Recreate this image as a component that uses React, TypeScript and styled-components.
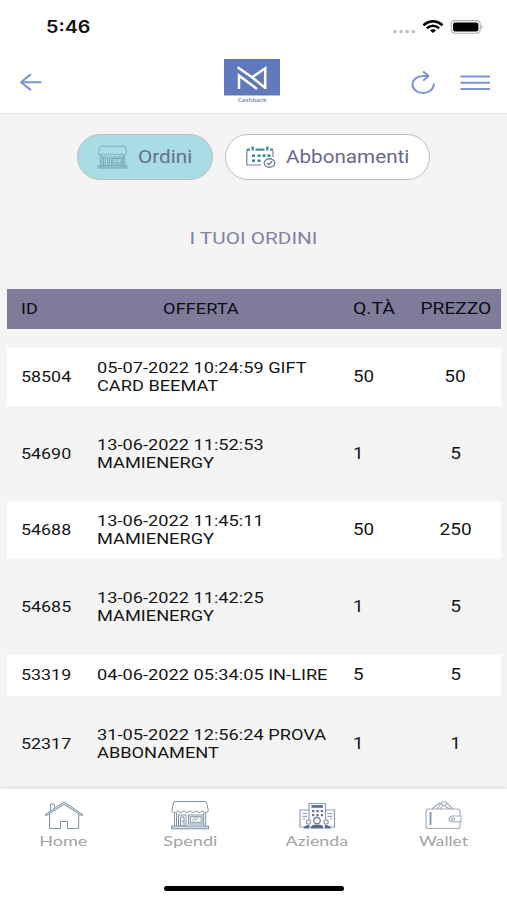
import React from "react";
import styled, { createGlobalStyle } from "styled-components";

const Global = createGlobalStyle`
  * { box-sizing: border-box; }
  body { margin: 0; background: #fff; font-family: Roboto, "Liberation Sans", sans-serif; }
`;

const Screen = styled.div`
  width: 507px;
  height: 900px;
  display: flex;
  flex-direction: column;
  overflow: hidden;
  background: #f4f4f4;
`;

const Wide = styled.span<{ $x: number; $from?: string }>`
  display: inline-block;
  white-space: nowrap;
  transform: scaleX(${(p) => p.$x});
  transform-origin: ${(p) => p.$from ?? "left"} center;
`;

const StatusBar = styled.div`
  height: 52px;
  flex: none;
  display: flex;
  justify-content: space-between;
  padding: 16px 23px 0 46px;
  background: #fff;
`;

const Clock = styled.div`
  padding-top: 1px;
  font: 600 17px/21px Inter, sans-serif;
  color: #111;
`;

const Header = styled.header`
  height: 62px;
  flex: none;
  display: grid;
  grid-template-columns: 224px 56px 1fr;
  background: #fff;
  border-bottom: 1px solid #e9e9e9;
`;

const HeaderSide = styled.div<{ $end?: boolean }>`
  display: flex;
  justify-content: ${(p) => (p.$end ? "flex-end" : "flex-start")};
  padding: ${(p) => (p.$end ? "17px 16px 0 0" : "20px 0 0 19px")};
  gap: 24px;
`;

const Brand = styled.div`
  display: flex;
  flex-direction: column;
  align-items: center;
  padding-top: 7px;
  font: 600 5.3px/9px "Open Sans", sans-serif;
  color: #6b82c4;
`;

const Main = styled.main`
  flex: 1;
  min-height: 0;
  overflow: hidden;
  padding: 20px 6.5px 0 7.4px;
`;

const Tabs = styled.div`
  display: flex;
  gap: 12px;
  padding-left: 70px;
`;

const Tab = styled.button<{ $active?: boolean; $w: number }>`
  width: ${(p) => p.$w}px;
  height: 46px;
  display: flex;
  align-items: center;
  gap: 9.5px;
  padding: 0 0 0 19px;
  border: 1.5px solid #bdbdc1;
  border-radius: 23px;
  background: ${(p) => (p.$active ? "#a9dde4" : "#fff")};
  color: ${(p) => (p.$active ? "#667089" : "#6b6889")};
  font: 400 17.5px/22px Roboto, sans-serif;
`;

const Title = styled.h1`
  margin: 47px 0 0;
  height: 22px;
  text-align: center;
  font: 400 17px/22px Roboto, sans-serif;
  color: #8481a3;
`;

const Table = styled.div`
  margin-top: 40px;
  display: flex;
  flex-direction: column;
  gap: 19.3px;
`;

const Row = styled.div<{ $kind: "head" | "odd" | "even"; $h: number }>`
  height: ${(p) => p.$h}px;
  flex: none;
  display: grid;
  grid-template-columns: 76px 256px 58px 1fr;
  align-items: center;
  padding-left: 13.3px;
  background: ${(p) => ({ head: "#7f7c9b", odd: "#fff", even: "transparent" })[p.$kind]};
  color: ${(p) => (p.$kind === "head" ? "#0d0d14" : "#161616")};
  font-size: 15.4px;
  line-height: 18px;
`;

const Cell = styled.div<{ $align?: string; $big?: boolean; $inset?: number }>`
  text-align: ${(p) => p.$align ?? "left"};
  font-size: ${(p) => (p.$big ? "16.2px" : "inherit")};
  padding-right: ${(p) => p.$inset ?? 0}px;
`;

const Offer = styled.div`
  width: 203px;
  transform: scaleX(1.183);
  transform-origin: left center;
`;

const NavBar = styled.nav`
  height: 111px;
  flex: none;
  display: flex;
  flex-direction: column;
  align-items: center;
  background: #fff;
  box-shadow: 0 -1px 4px rgba(0, 0, 0, 0.1);
  z-index: 1;
`;

const NavItems = styled.div`
  width: 507px;
  height: 97px;
  padding-left: 0.4px;
  display: grid;
  grid-template-columns: repeat(4, 126.5px);
`;

const NavItem = styled.div`
  display: flex;
  flex-direction: column;
  align-items: center;
  padding-top: 11px;
  font: 400 13px/18px Lato, sans-serif;
  color: #a3a3a6;
  svg { margin-bottom: 2px; }
`;

const HomeIndicator = styled.div`
  width: 180px;
  height: 5px;
  border-radius: 3px;
  background: #000;
`;

const StatusIcons = () => (
  <svg width="92" height="24" viewBox="0 0 92 24">
    <g fill="#c3c3c5">
      <circle cx="3" cy="15.6" r="1.9" /><circle cx="9" cy="15.6" r="1.9" />
      <circle cx="15.2" cy="15.6" r="1.9" /><circle cx="21.3" cy="15.6" r="1.9" />
    </g>
    <g fill="none" stroke="#000" strokeWidth="2.4">
      <path d="M31.4 9.2 Q41 1.5 50.6 9.2" />
      <path d="M34.8 12.2 Q41 7.4 47.2 12.2" />
    </g>
    <path d="M37.8 14.3 Q41 12 44.2 14.3 L41 17Z" fill="#000" />
    <rect x="59.2" y="4.6" width="29" height="12.6" rx="3.6" fill="none" stroke="#aaa" strokeWidth="1.1" />
    <rect x="61" y="6.4" width="25.4" height="9" rx="2" fill="#000" />
    <path d="M89.6 9 Q91.6 11 89.6 13Z" fill="#999" />
  </svg>
);

const BackIcon = () => (
  <svg width="24" height="22" viewBox="0 0 24 22" fill="none" stroke="#7f94d8" strokeWidth="2.1" strokeLinecap="round" strokeLinejoin="round">
    <path d="M21.7 10.2H2.2M11.3 2.6L2 10.2L11.3 17.6" />
  </svg>
);

const RefreshIcon = () => (
  <svg width="26" height="28" viewBox="0 0 26 28" fill="none" stroke="#7f94d8" strokeWidth="2" strokeLinecap="round" strokeLinejoin="round">
    <path d="M18 7H13C7 7 2.500 10.800 2.500 15.600C2.500 20.200 7 24 13 24C19 24 23.600 20.200 23.800 15.300" />
    <path d="M13.800 3L18.600 7L13.800 11" />
  </svg>
);

const MenuIcon = () => (
  <svg width="31" height="28" viewBox="0 0 31 28" stroke="#7f94d8" strokeWidth="2" strokeLinecap="round">
    <path d="M1.300 7.500H29.300M1.300 13.800H29.300M1.300 20H29.300" />
  </svg>
);

const Logo = () => (
  <svg width="56" height="37" viewBox="0 0 56 37">
    <rect width="56" height="36.500" fill="#6079bc" />
    <g fill="none" stroke="#fff" strokeWidth="2.500">
      <path d="M15 30V16.500L33 30" />
      <path d="M13.600 8.200L28 18.300L41.200 9.300V30" />
      <path d="M28 18.300L41 28.700" />
    </g>
  </svg>
);

const ShopIcon = ({ color, tint, width = 40, height = 30 }: { color: string; tint: string; width?: number; height?: number }) => (
  <svg width={width} height={height} viewBox="0 0 40 30" preserveAspectRatio="none" fill="none" stroke={color} strokeWidth="1">
    <path d="M5 1.500H35Q36.500 1.500 36.800 3L38.300 10.500Q38 12.500 35.500 12.500Q33 12.500 32.400 10.500Q31.500 12.500 29.300 12.500Q27.200 12.500 26.400 10.500Q25.500 12.500 23.200 12.500Q21 12.500 20.200 10.500Q19.300 12.500 17 12.500Q14.800 12.500 14 10.500Q13 12.500 10.800 12.500Q8.600 12.500 7.700 10.500Q6.500 12.500 4.300 12.500Q2 12.500 1.800 10.500L3.300 3Q3.600 1.500 5 1.500Z" />
    <path d="M4.500 12.500V26M6.500 12.500V26M33.700 12.500V26M35.700 12.500V26" />
    <rect x="8.500" y="15" width="7.500" height="11" /><path d="M10.500 26V17H14V26" />
    <circle cx="13" cy="21.500" r=".6" />
    <rect x="18.500" y="15" width="14.500" height="9" /><rect x="20.300" y="16.700" width="10.900" height="5.600" />
    <path d="M22 20.500L26 17M24.500 21L28 18" />
    <rect x="1.500" y="26" width="37" height="2.800" fill={tint} />
  </svg>
);

const CalendarIcon = () => (
  <svg width="32" height="24" viewBox="0 0 32 24" fill="none">
    <path d="M2.500 4Q1.800 4 1.800 6V20H16" stroke="#77819f" strokeWidth="1.200" />
    <path d="M28 6V12" stroke="#77819f" strokeWidth="1.200" />
    <path d="M2 4.600H5M10.500 4.600H19.500M25 4.600H28M7.700 1.500V5.500M22.300 1.500V5.500" stroke="#3d8f9c" strokeWidth="2.300" />
    <g fill="#3b7f92">
      <rect x="7" y="9.500" width="3" height="2.400" /><rect x="12.500" y="9.500" width="3" height="2.400" /><rect x="17.500" y="9.500" width="3" height="2.400" /><rect x="22.500" y="9.500" width="3" height="2.400" />
      <rect x="7" y="14.500" width="3" height="2.400" /><rect x="12.500" y="14.500" width="3" height="2.400" />
    </g>
    <ellipse cx="24.500" cy="18" rx="5.200" ry="4.200" fill="#fff" stroke="#77819f" strokeWidth="1.400" />
    <path d="M22 18L24 19.700L27 16.200" stroke="#5d6a8d" strokeWidth="1.200" />
  </svg>
);

const HomeIcon = () => (
  <svg width="40" height="30" viewBox="0 0 40 30" fill="none" stroke="#7d92a8" strokeWidth="1">
    <path d="M6.500 10V4H10.500V7.300" />
    <path d="M1 14.700L20 2L39 14.700L37.700 15.800L20 4.400L2.300 15.800Z" fill="#d9e1e8" />
    <path d="M5.500 14V28.500H16.500V21.500H23.500V28.500H34.700V14" />
  </svg>
);

const CompanyIcon = () => (
  <svg width="40" height="30" viewBox="0 0 40 30" fill="none" stroke="#8fa0b5" strokeWidth="1.200">
    <path d="M12 10H3V27H8M28.500 10H37.500V27H32" />
    <path d="M12 20V3.500H28.500V20" />
    <rect x="14.500" y="5" width="11.500" height="2.800" fill="#64768f" stroke="none" />
    <path d="M15 11.200H26M15 15.200H26" stroke="#64768f" strokeWidth="2.200" strokeDasharray="2.400 2" />
    <path d="M5.500 13.500H10M5.500 16.300H10M5.500 19H8M30.500 13.500H35M30.500 16.300H35M33 19H35" />
    <circle cx="20" cy="20.500" r="3.200" fill="#fff" stroke="#64768f" />
    <circle cx="11.500" cy="22" r="2.200" fill="#fff" /><circle cx="29" cy="22" r="2.200" fill="#fff" />
    <path d="M13.500 28.500Q13 24.500 20 24.500Q27 24.500 26.500 28.500Z M6.500 28.500Q7 25 12.500 25V28.500Z M27.700 28.500V25Q33.500 25 34 28.500Z" fill="#566b89" stroke="none" />
  </svg>
);

const WalletIcon = () => (
  <svg width="40" height="30" viewBox="0 0 40 30" fill="none" stroke="#a2acb8" strokeWidth="1.100">
    <path d="M9 9L16.500 3L20 5L17 9M14 9L19 2H23L30 9M20 5L27 9M24 3.500L21 6" />
    <rect x="3" y="9" width="34" height="19.500" rx="2" />
    <path d="M7.500 12V25" stroke="#8291a2" strokeWidth="1.800" />
    <path d="M38 16H29Q26 16.500 26 19Q26 21.500 29 21.700H38Z" fill="#fff" />
    <ellipse cx="30" cy="19" rx="1.700" ry="1.300" />
  </svg>
);

const orders = [
  { id: "58504", offer: "05-07-2022 10:24:59 GIFT CARD BEEMAT", qty: "50", price: "50", h: 57.3 },
  { id: "54690", offer: "13-06-2022 11:52:53 MAMIENERGY", qty: "1", price: "5", h: 57.3 },
  { id: "54688", offer: "13-06-2022 11:45:11 MAMIENERGY", qty: "50", price: "250", h: 57.3 },
  { id: "54685", offer: "13-06-2022 11:42:25 MAMIENERGY", qty: "1", price: "5", h: 57.3 },
  { id: "53319", offer: "04-06-2022 05:34:05 IN-LIRE", qty: "5", price: "5", h: 41 },
  { id: "52317", offer: "31-05-2022 12:56:24 PROVA ABBONAMENT", qty: "1", price: "1", h: 57.3 },
];

export default function App() {
  return (
    <Screen>
      <Global />
      <StatusBar>
        <Clock><Wide $x={1.16}>5:46</Wide></Clock>
        <StatusIcons />
      </StatusBar>
      <Header>
        <HeaderSide><BackIcon /></HeaderSide>
        <Brand><Logo /><Wide $x={1.18} $from="center">Cashback</Wide></Brand>
        <HeaderSide $end><RefreshIcon /><MenuIcon /></HeaderSide>
      </Header>
      <Main>
        <Tabs>
          <Tab $active $w={135.5}>
            <ShopIcon color="#6f9fac" tint="#92c7d0" width={31} height={24} />
            <Wide $x={1.185}>Ordini</Wide>
          </Tab>
          <Tab $w={205}>
            <CalendarIcon />
            <Wide $x={1.18}>Abbonamenti</Wide>
          </Tab>
        </Tabs>
        <Title><Wide $x={1.22} $from="center">I TUOI ORDINI</Wide></Title>
        <Table>
          <Row $kind="head" $h={40}>
            <Cell><Wide $x={1.17}>ID</Wide></Cell>
            <Cell $align="center" $inset={47}><Wide $x={1.185} $from="center">OFFERTA</Wide></Cell>
            <Cell $big><Wide $x={1.2}>Q.TÀ</Wide></Cell>
            <Cell $align="center" $big><Wide $x={1.185} $from="center">PREZZO</Wide></Cell>
          </Row>
          {orders.map((o, i) => (
            <Row key={o.id} $kind={i % 2 ? "even" : "odd"} $h={o.h}>
              <Cell><Wide $x={1.16}>{o.id}</Wide></Cell>
              <Offer>{o.offer}</Offer>
              <Cell $big><Wide $x={1.16}>{o.qty}</Wide></Cell>
              <Cell $big $align="center"><Wide $x={1.18} $from="center">{o.price}</Wide></Cell>
            </Row>
          ))}
        </Table>
      </Main>
      <NavBar>
        <NavItems>
          <NavItem><HomeIcon /><Wide $x={1.39} $from="center">Home</Wide></NavItem>
          <NavItem><ShopIcon color="#8195aa" tint="#d3dbe2" /><Wide $x={1.4} $from="center">Spendi</Wide></NavItem>
          <NavItem><CompanyIcon /><Wide $x={1.37} $from="center">Azienda</Wide></NavItem>
          <NavItem><WalletIcon /><Wide $x={1.33} $from="center">Wallet</Wide></NavItem>
        </NavItems>
        <HomeIndicator />
      </NavBar>
    </Screen>
  );
}
